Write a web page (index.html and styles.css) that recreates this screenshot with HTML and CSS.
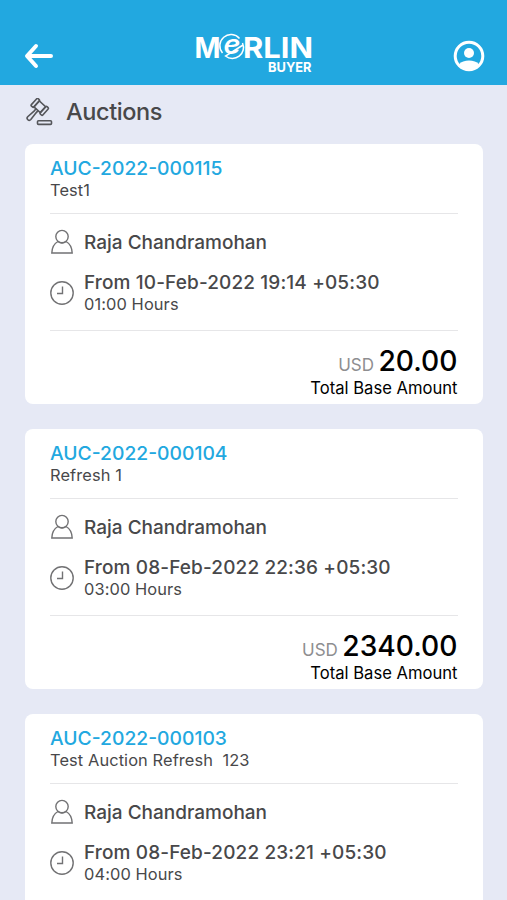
FILE: index.html
```html
<!DOCTYPE html>
<html lang="en">
<head>
	<meta charset="utf-8">
	<title>Merlin Buyer - Auctions</title>
	<link rel="stylesheet" href="styles.css">
</head>
<body>
	<svg class="symbols" xmlns="http://www.w3.org/2000/svg">
		<symbol id="user" viewBox="0 0 24 26">
			<circle cx="12" cy="7.6" r="6.2"/>
			<path d="M8 12.5C4.5 14.4 2 18.5 1.8 24H22.2C22 18.5 19.5 14.4 16 12.5"/>
			<path d="M8 12.5C10.5 14.3 13.5 14.3 16 12.5"/>
		</symbol>
		<symbol id="clock" viewBox="0 0 24 26">
			<circle cx="12" cy="13" r="11.2"/>
			<path d="M12.5 6.5V13.5H7"/>
		</symbol>
	</svg>

	<header class="topbar">
		<svg class="back" viewBox="0 0 30 26">
			<path d="M12 3L3 13L12 23M3.5 13H27"/>
		</svg>
		<svg class="logo" viewBox="0 0 120 42">
			<text class="logo-name" x="-0.5" y="24.5" textLength="26" lengthAdjust="spacingAndGlyphs">M</text>
			<text class="logo-e" x="28.5" y="20.5" textLength="17" lengthAdjust="spacingAndGlyphs">e</text>
			<path class="logo-ring" d="M27.5 20A11 11 0 0 1 44.5 5.5M47.5 10A11 11 0 0 1 30.5 23L48 12"/>
			<text class="logo-name" x="48" y="24.5" textLength="70" lengthAdjust="spacingAndGlyphs">RLIN</text>
			<text class="logo-sub" x="73" y="38.5" textLength="43.5" lengthAdjust="spacingAndGlyphs">BUYER</text>
		</svg>
		<svg class="profile" viewBox="0 0 32 32">
			<circle class="profile-ring" cx="16" cy="16" r="13.8"/>
			<circle cx="16" cy="13" r="5"/>
			<path d="M6 24.5C8 21.5 12 20.5 16 20.5S24 21.5 26 24.5C23.5 28 20 29.5 16 29.5S8.5 28 6 24.5Z"/>
		</svg>
	</header>

	<main class="page">
		<div class="heading">
			<svg class="gavel" viewBox="0 0 28 28">
				<g transform="rotate(42 15 9)">
					<rect x="7" y="4" width="3.4" height="10" rx="1"/>
					<rect x="10.4" y="5" width="8.6" height="8"/>
					<rect x="19" y="4" width="3.4" height="10" rx="1"/>
					<path d="M13.3 13V16L12.4 24.5A1.9 1.9 0 0 0 16.6 24.5L16 16V13"/>
				</g>
				<rect x="12.5" y="22.8" width="14" height="3.6" rx="1"/>
			</svg>
			<h1>Auctions</h1>
		</div>

		<section class="card">
			<div class="card-title">
				<h2>AUC-2022-000115</h2>
				<p class="small">Test1</p>
			</div>
			<div class="details">
				<div class="row">
					<svg class="icon"><use href="#user"/></svg>
					<p class="name">Raja Chandramohan</p>
				</div>
				<div class="row">
					<svg class="icon"><use href="#clock"/></svg>
					<div>
						<p class="date">From 10-Feb-2022 19:14 +05:30</p>
						<p class="small">01:00 Hours</p>
					</div>
				</div>
			</div>
			<div class="total">
				<p class="amount"><span class="currency">USD</span> 20.00</p>
				<p class="label">Total Base Amount</p>
			</div>
		</section>

		<section class="card">
			<div class="card-title">
				<h2>AUC-2022-000104</h2>
				<p class="small">Refresh 1</p>
			</div>
			<div class="details">
				<div class="row">
					<svg class="icon"><use href="#user"/></svg>
					<p class="name">Raja Chandramohan</p>
				</div>
				<div class="row">
					<svg class="icon"><use href="#clock"/></svg>
					<div>
						<p class="date">From 08-Feb-2022 22:36 +05:30</p>
						<p class="small">03:00 Hours</p>
					</div>
				</div>
			</div>
			<div class="total">
				<p class="amount"><span class="currency">USD</span> 2340.00</p>
				<p class="label">Total Base Amount</p>
			</div>
		</section>

		<section class="card card-last">
			<div class="card-title">
				<h2>AUC-2022-000103</h2>
				<p class="small">Test Auction Refresh&nbsp; 123</p>
			</div>
			<div class="details">
				<div class="row">
					<svg class="icon"><use href="#user"/></svg>
					<p class="name">Raja Chandramohan</p>
				</div>
				<div class="row">
					<svg class="icon"><use href="#clock"/></svg>
					<div>
						<p class="date">From 08-Feb-2022 23:21 +05:30</p>
						<p class="small">04:00 Hours</p>
					</div>
				</div>
			</div>
		</section>
	</main>
</body>
</html>
```
FILE: styles.css
```css
* {
	box-sizing: border-box;
}

body {
	display: flex;
	flex-direction: column;
	margin: 0;
	height: 100vh;
	background-color: #e6e9f5;
	font-family: Inter, "Liberation Sans", sans-serif;
	color: #48484a;
}

h1, h2, p {
	margin: 0;
	font-weight: 400;
	white-space: nowrap;
}

svg {
	display: block;
	flex: none;
	fill: none;
}

.symbols {
	display: none;
}

.topbar {
	display: flex;
	flex: none;
	justify-content: space-between;
	align-items: flex-end;
	height: 85px;
	padding: 0 22px 13px 24px;
	background-color: #22a8e0;
}

.back {
	width: 30px;
	height: 26px;
	margin-bottom: 3px;
	stroke: #fff;
	stroke-width: 4;
	stroke-linecap: round;
	stroke-linejoin: round;
}

.logo {
	width: 120px;
	height: 42px;
	margin-bottom: -3px;
	margin-left: 2px;
	overflow: visible;
	fill: #fff;
}

.logo-name {
	font-size: 29px;
	font-weight: 700;
}

.logo-e {
	font-size: 26px;
	font-weight: 600;
	font-style: italic;
}

.logo-ring {
	fill: none;
	stroke: #fff;
	stroke-width: 1.5;
}

.logo-sub {
	font-size: 13.5px;
	font-weight: 700;
}

.profile {
	width: 32px;
	height: 32px;
	fill: #fff;
}

.profile-ring {
	fill: none;
	stroke: #fff;
	stroke-width: 3;
}

.page {
	display: flex;
	flex: 1;
	flex-direction: column;
	min-height: 0;
	padding: 0 24.5px 0 25px;
}

.heading {
	display: flex;
	flex: none;
	align-items: center;
	gap: 13px;
	height: 58.5px;
	padding-bottom: 5px;
}

.gavel {
	width: 28px;
	height: 28px;
	stroke: #55565a;
	stroke-width: 1.6;
}

h1 {
	font-size: 23.5px;
	font-weight: 500;
	letter-spacing: -0.4px;
}

.card {
	flex: none;
	height: 260.7px;
	margin-bottom: 24.5px;
	padding: 12.5px 25px 0;
	border-radius: 8px;
	background-color: #fff;
}

.card-last {
	flex: 1;
	height: auto;
	min-height: 0;
	margin-bottom: 0;
	border-radius: 8px 8px 0 0;
	overflow: hidden;
}

.card-title {
	height: 57.5px;
	border-bottom: 1px solid #e6e6e8;
}

h2 {
	color: #22a8e0;
	font-size: 19.3px;
	font-weight: 500;
	line-height: 24px;
}

.small {
	font-size: 16.4px;
	line-height: 20px;
	letter-spacing: 0.1px;
}

.details {
	height: 117px;
	padding-top: 15.5px;
	border-bottom: 1px solid #e6e6e8;
}

.card-last .details {
	border-bottom: 0;
}

.row {
	display: flex;
	align-items: center;
	gap: 10px;
}

.row + .row {
	margin-top: 16.5px;
}

.icon {
	width: 24px;
	height: 26px;
	stroke: #727274;
	stroke-width: 1.4;
}

.name, .date {
	font-size: 19px;
	font-weight: 500;
	line-height: 22px;
}

.name {
	padding-top: 1px;
}

.date {
	letter-spacing: 0.13px;
}

.total {
	padding-top: 14px;
	text-align: right;
	color: #000;
}

.amount {
	font-size: 28.2px;
	font-weight: 500;
	line-height: 32px;
	word-spacing: -3px;
}

.currency {
	color: #8e8e90;
	font-size: 17px;
	font-weight: 400;
}

.label {
	margin-top: -4px;
	font-size: 16.6px;
	line-height: 22px;
}
```
